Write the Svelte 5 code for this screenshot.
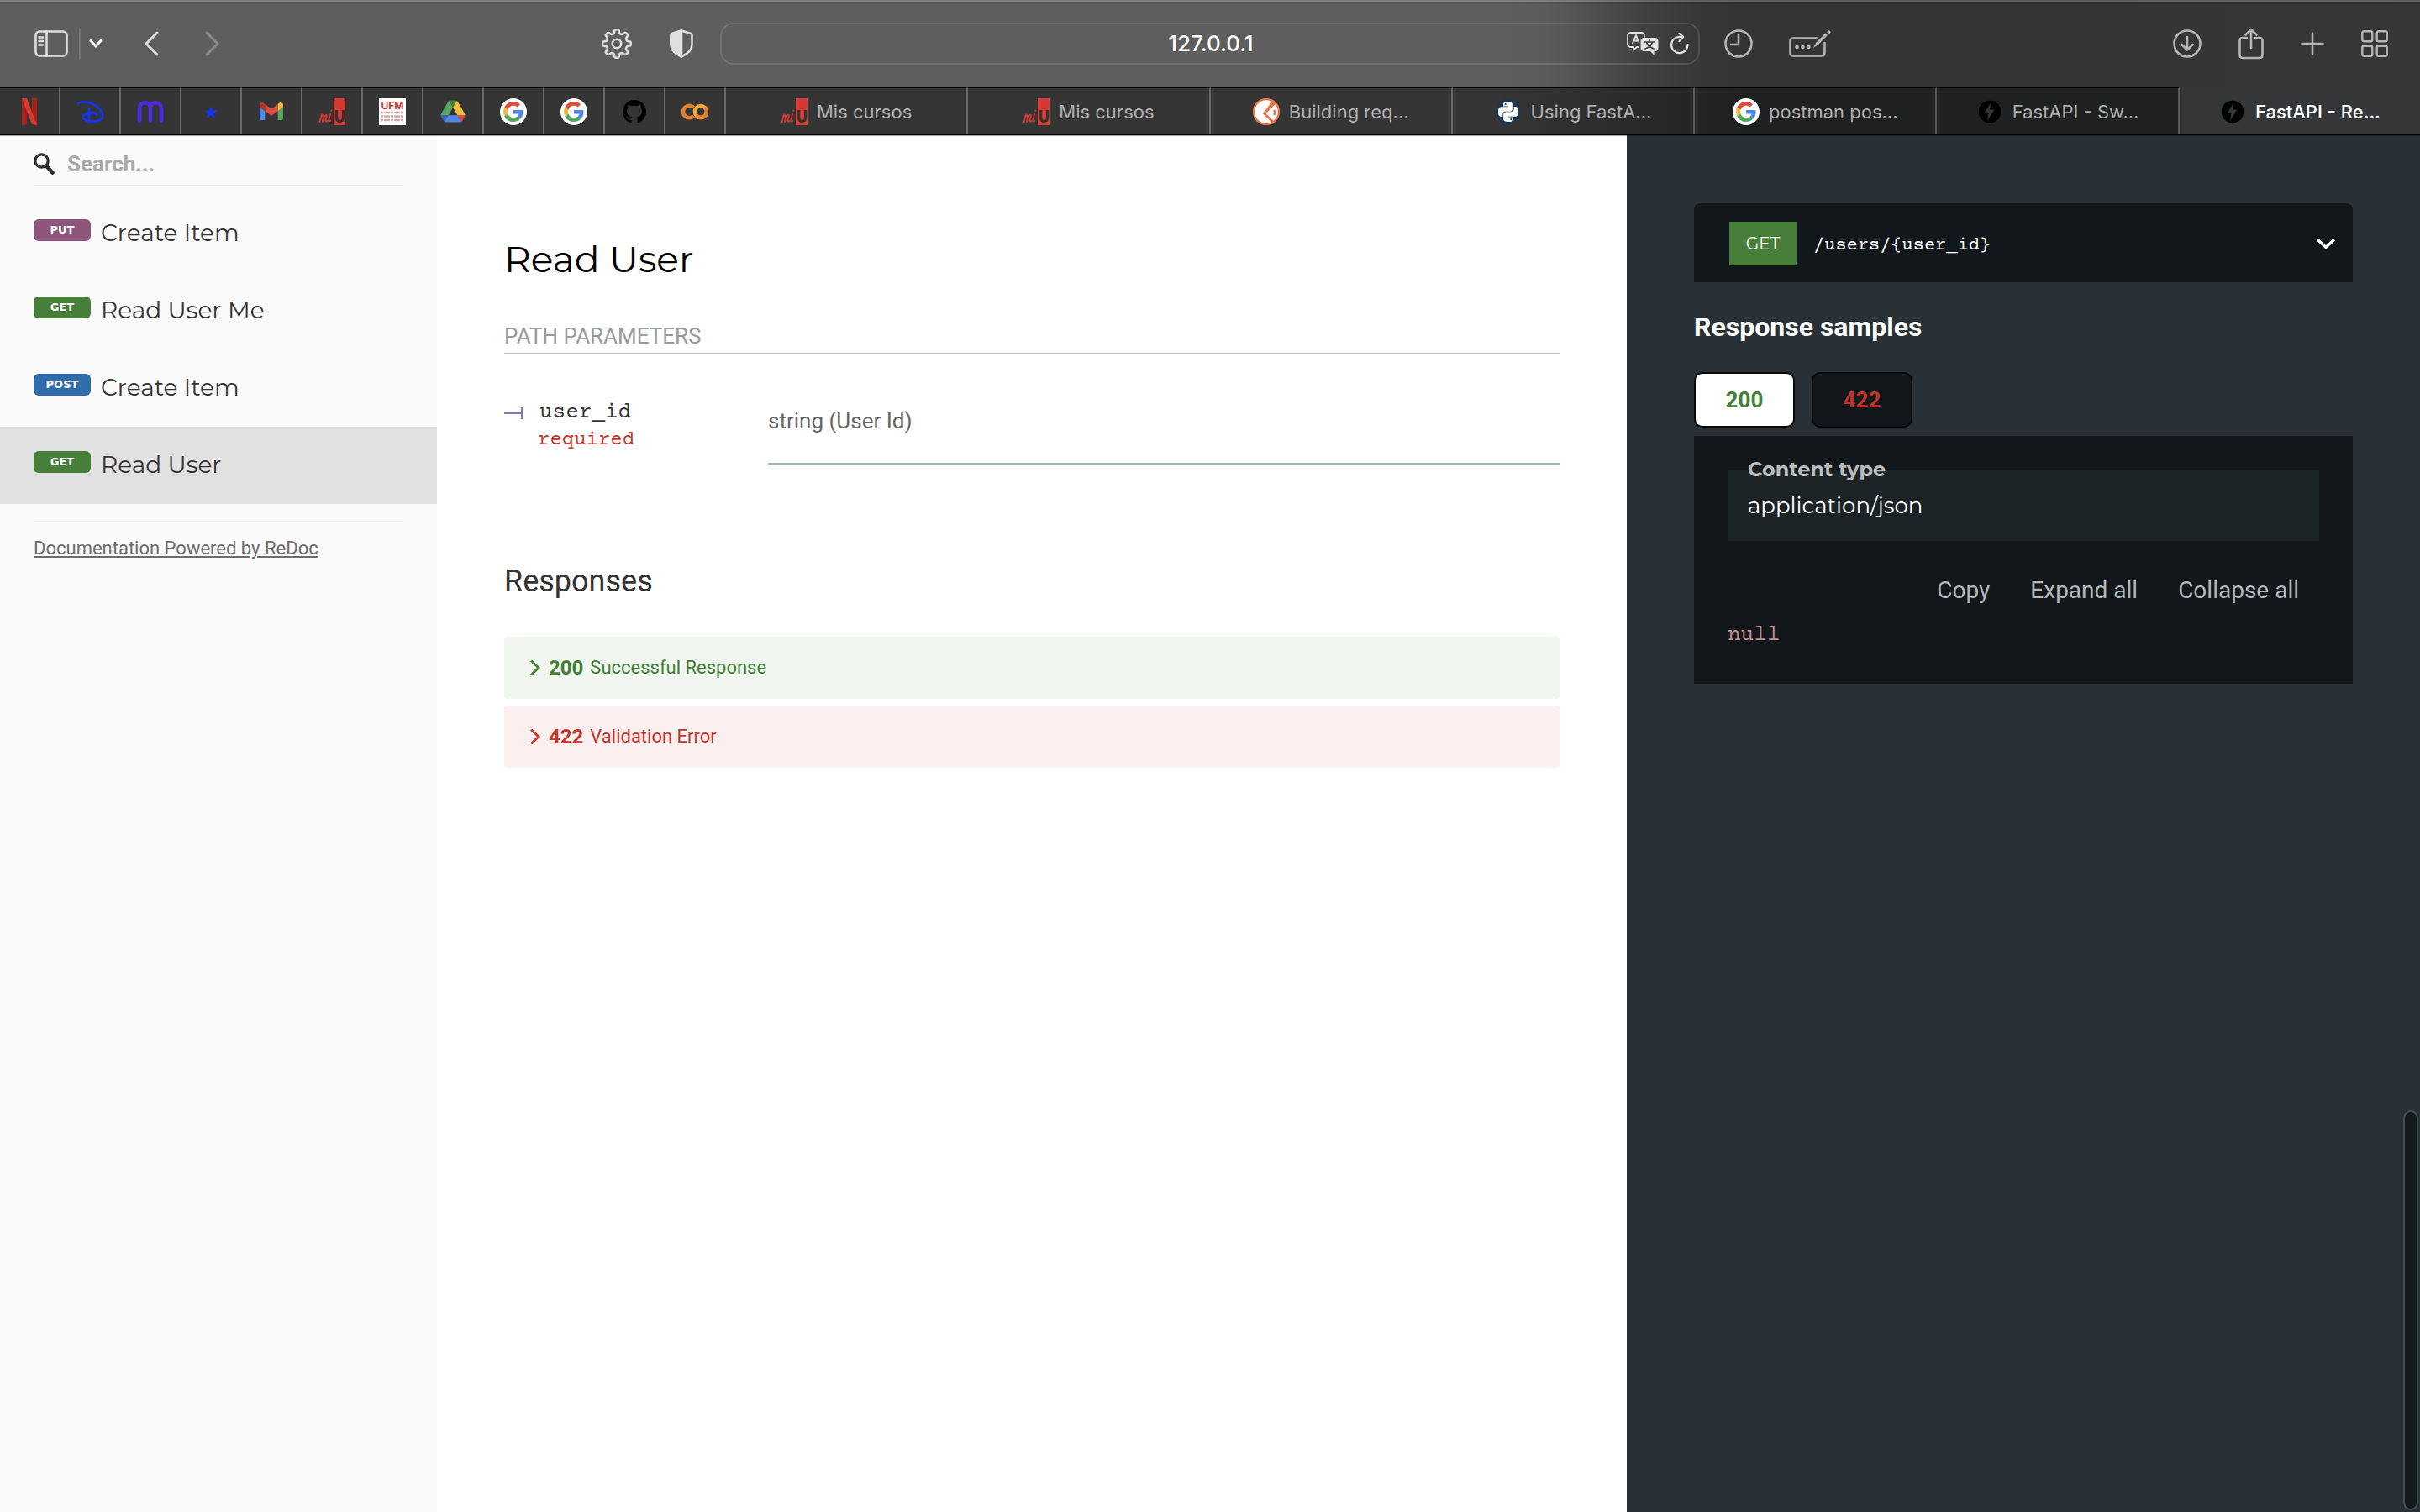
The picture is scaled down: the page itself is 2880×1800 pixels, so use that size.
<script>
  const pinned = ['netflix', 'disney', 'miro', 'star', 'gmail', 'miu', 'ufm', 'drive', 'google', 'google', 'github', 'colab'];
  const pinnedNames = ['Netflix', 'Disney+', 'Miro', 'Starred', 'Gmail', 'MiU', 'UFM', 'Google Drive', 'Google', 'Google', 'GitHub', 'Colab'];
  const tabs = [
    { icon: 'miu', title: 'Mis cursos' },
    { icon: 'miu', title: 'Mis cursos' },
    { icon: 'building', title: 'Building req...' },
    { icon: 'python', title: 'Using FastA...' },
    { icon: 'google', title: 'postman pos...' },
    { icon: 'bolt', title: 'FastAPI - Sw...' },
    { icon: 'bolt', title: 'FastAPI - Re...', active: true },
  ];
  const operations = [
    { method: 'put', title: 'Create Item' },
    { method: 'get', title: 'Read User Me' },
    { method: 'post', title: 'Create Item' },
    { method: 'get', title: 'Read User', active: true },
  ];
  const responses = [
    { code: '200', text: 'Successful Response', kind: 'ok' },
    { code: '422', text: 'Validation Error', kind: 'bad' },
  ];
  let selected = $state('200');
  let url = $state('127.0.0.1');
  let query = $state('');

  // Outline of an eight-toothed gear centred on (18, 18)
  const gear = Array.from({ length: 160 }, (_, i) => {
    const a = (i / 160) * Math.PI * 2;
    const r = 14.6 + 2.3 * Math.tanh(Math.cos(a * 8) * 2.2);
    return `${i ? 'L' : 'M'}${(18 + r * Math.cos(a)).toFixed(2)} ${(18 + r * Math.sin(a)).toFixed(2)}`;
  }).join('') + 'Z';
</script>

{#snippet favicon(name)}
  <svg class="favicon" viewBox="0 0 32 32" aria-hidden="true">
    {#if name === 'netflix'}
      <path d="M7 0h6v31l-6 1zM19 0h6v32l-6-1z" fill="#a3231c" />
      <path d="M7 0h6l12 32-6-1z" fill="#d63a2c" />
    {:else if name === 'disney'}
      <g fill="none" stroke="#1433f5" stroke-width="2.800" stroke-linecap="round">
        <path d="M2 6C6 3 17 4 25 10c7 6 8 13 3 16-6 3-15 2-19-1-3-4 1-7 8-8 5 0 7 1 7 3" />
        <path d="M15 12v17" />
      </g>
    {:else if name === 'miro'}
      <path d="M3 27V12c0-9 13-9 13 0v15M16 12c0-9 13-9 13 0v15" fill="none" stroke="#4b2bdb" stroke-width="4.600" stroke-linecap="round" />
    {:else if name === 'star'}
      <path d="M16 9l2 5.400 6 .2-4.700 3.400 1.800 6L16 20.600 10.900 24l1.800-6L8 14.600l6-.2z" fill="#1433f5" />
    {:else if name === 'gmail'}
      <g transform="translate(2 5) scale(.318) translate(-52 -42)">
        <path fill="#4f87ed" d="M58 108h14V74L52 59v43c0 3.320 2.690 6 6 6" />
        <path fill="#58a55c" d="M120 108h14c3.320 0 6-2.690 6-6V59l-20 15" />
        <path fill="#f3bd42" d="M120 48v26l20-15v-8c0-7.420-8.470-11.650-14.400-7.200" />
        <path fill="#da4f3e" d="M72 74V48l24 18 24-18v26L96 92" />
        <path fill="#b7332a" d="M52 51v8l20 15V48l-5.600-4.200c-5.940-4.450-14.400-.22-14.400 7.200" />
      </g>
    {:else if name === 'miu'}
      <rect x="18" width="14" height="32" fill="#d43a33" />
      <path d="M21.500 14v9c0 6 8 6 8 0v-9" fill="none" stroke="#333" stroke-width="3.400" />
      <path d="M1.500 28L4 19.500M2.600 24c1-4 4.500-5.500 3.800-2.500L4.900 28M5.900 24c1-4 4.500-5.500 3.800-2.500L8.500 26.500c-.3 1.500.6 1.500 1.500.5M14 19l-1.700 7.500c-.3 1.500.8 1.500 1.800.3M15.300 14.500v.3" fill="none" stroke="#d43a33" stroke-width="1.900" stroke-linecap="round" stroke-linejoin="round" />
    {:else if name === 'ufm'}
      <rect width="32" height="32" fill="#fff" />
      <text x="16" y="13" text-anchor="middle" class="ufm">UFM</text>
      <path d="M2 17h28M2 21.500h28M2 26h28" stroke="#c98b88" stroke-width="2.400" stroke-dasharray="3 1" opacity=".75" />
    {:else if name === 'drive'}
      <g transform="translate(1.500 2.500) scale(.333)">
        <path d="m6.600 66.850 3.850 6.650c.8 1.400 1.950 2.500 3.300 3.300l13.750-23.800h-27.500c0 1.550.4 3.100 1.200 4.500z" fill="#3568cc" />
        <path d="m43.650 25-13.750-23.800c-1.350.8-2.500 1.900-3.300 3.300l-25.400 44a9 9 0 0 0-1.200 4.500h27.500z" fill="#58a55c" />
        <path d="m73.550 76.800c1.350-.8 2.500-1.900 3.300-3.300l1.600-2.750 7.650-13.250c.8-1.400 1.200-2.950 1.200-4.500h-27.500l5.850 11.500z" fill="#da4f3e" />
        <path d="m43.650 25 13.750-23.800c-1.350-.8-2.900-1.200-4.500-1.200h-18.500c-1.600 0-3.150.45-4.500 1.200z" fill="#3b8140" />
        <path d="m59.800 53h-32.300l-13.750 23.800c1.350.8 2.900 1.200 4.500 1.200h50.800c1.600 0 3.150-.45 4.500-1.200z" fill="#4f87ed" />
        <path d="m73.400 26.500-12.700-22c-.8-1.400-1.950-2.500-3.300-3.300l-13.750 23.800 16.150 28h27.450c0-1.550-.4-3.100-1.200-4.500z" fill="#f3bd42" />
      </g>
    {:else if name === 'google'}
      <circle cx="16" cy="16" r="16" fill="#fff" />
      <g transform="translate(4 4) scale(.5)">
        <path fill="#da4f3e" d="M24 9.500c3.540 0 6.710 1.220 9.210 3.600l6.850-6.850C35.900 2.380 30.470 0 24 0 14.620 0 6.510 5.380 2.560 13.220l7.980 6.190C12.430 13.720 17.740 9.500 24 9.500z" />
        <path fill="#4f87ed" d="M46.980 24.550c0-1.570-.15-3.090-.38-4.550H24v9.020h12.940c-.58 2.960-2.260 5.480-4.780 7.180l7.730 6c4.510-4.180 7.090-10.360 7.090-17.650z" />
        <path fill="#f3bd42" d="M10.530 28.590c-.48-1.450-.76-2.990-.76-4.590s.27-3.140.76-4.590l-7.980-6.190C.92 16.460 0 20.120 0 24c0 3.880.92 7.540 2.560 10.780l7.970-6.190z" />
        <path fill="#58a55c" d="M24 48c6.480 0 11.930-2.130 15.890-5.810l-7.730-6c-2.150 1.450-4.920 2.300-8.160 2.300-6.260 0-11.570-4.220-13.470-9.910l-7.980 6.190C6.510 42.620 14.620 48 24 48z" />
      </g>
    {:else if name === 'github'}
      <path transform="translate(2 2) scale(1.750)" fill="#000" d="M8 0C3.580 0 0 3.580 0 8c0 3.540 2.290 6.530 5.470 7.590.4.070.55-.17.55-.38 0-.19-.01-.82-.01-1.490-2.010.37-2.530-.49-2.690-.94-.09-.23-.48-.94-.82-1.130-.28-.15-.68-.52-.01-.53.63-.01 1.080.58 1.230.82.72 1.210 1.870.87 2.330.66.07-.52.28-.87.51-1.070-1.780-.2-3.640-.89-3.640-3.950 0-.87.31-1.590.82-2.150-.08-.2-.36-1.020.08-2.120 0 0 .67-.21 2.200.82.64-.18 1.320-.27 2-.27s1.360.09 2 .27c1.530-1.040 2.200-.82 2.200-.82.44 1.100.16 1.920.08 2.120.51.56.82 1.270.82 2.150 0 3.070-1.870 3.750-3.650 3.950.29.25.54.73.54 1.480 0 1.070-.01 1.930-.01 2.200 0 .21.15.46.55.38A8.010 8.010 0 0 0 16 8c0-4.420-3.580-8-8-8z" />
    {:else if name === 'colab'}
      <g fill="none" stroke-width="4.600">
        <path d="M14.500 10.800a7.300 7.300 0 1 0 0 10.400" stroke="#e2802f" />
        <circle cx="23" cy="16" r="7" stroke="#f0a93c" />
        <path d="M18 21a7 7 0 0 0 10-10" stroke="#e2802f" />
      </g>
    {:else if name === 'building'}
      <circle cx="16" cy="16" r="15" fill="#fff" stroke="#ec7442" stroke-width="2.400" />
      <path d="M24 4.500L13.500 18 24 28M13.500 18L26 6" fill="none" stroke="#ec7442" stroke-width="2.600" />
      <path d="M25 14c1.500 2 1.500 4 0 6" fill="none" stroke="#ec7442" stroke-width="2.200" />
    {:else if name === 'python'}
      <circle cx="16" cy="16" r="15" fill="#1d3850" />
      <path transform="translate(4 4)" fill="#fff" d="M14.250.18l.9.2.73.26.59.3.45.32.34.34.25.34.16.33.1.3.04.26.02.2-.01.13V8.500l-.05.63-.13.55-.21.46-.26.38-.3.31-.33.25-.35.19-.35.14-.33.1-.3.07-.26.04-.21.02H8.770l-.69.05-.59.14-.5.22-.41.27-.33.32-.27.35-.2.36-.15.37-.1.35-.07.32-.04.27-.02.21v3.060H3.170l-.21-.03-.28-.07-.32-.12-.35-.18-.36-.26-.36-.36-.35-.46-.32-.59-.28-.73-.21-.88-.14-1.050-.05-1.230.06-1.220.16-1.040.24-.87.32-.71.36-.57.4-.44.42-.33.42-.24.4-.16.36-.1.32-.05.24-.01h.16l.06.01h8.160v-.83H6.180l-.01-2.750-.02-.37.05-.34.11-.31.17-.28.25-.26.31-.23.38-.2.44-.18.51-.15.58-.12.64-.1.71-.06.77-.04.84-.02 1.270.05zm-6.300 1.980l-.23.33-.08.41.08.41.23.34.33.22.41.09.41-.09.33-.22.23-.34.08-.41-.08-.41-.23-.33-.33-.22-.41-.09-.41.09zm13.090 3.950l.28.06.32.12.35.18.36.27.36.35.35.47.32.59.28.73.21.88.14 1.040.05 1.230-.06 1.230-.16 1.040-.24.86-.32.71-.36.57-.4.45-.42.33-.42.24-.4.16-.36.09-.32.05-.24.02-.16-.01h-8.220v.82h5.840l.01 2.760.02.36-.05.34-.11.31-.17.29-.25.25-.31.24-.38.2-.44.17-.51.15-.58.13-.64.09-.71.07-.77.04-.84.01-1.270-.04-1.070-.14-.9-.2-.73-.25-.59-.3-.45-.33-.34-.34-.25-.34-.16-.33-.1-.3-.04-.25-.02-.2.01-.13v-5.340l.05-.64.13-.54.21-.46.26-.38.3-.32.33-.24.35-.2.35-.14.33-.1.3-.06.26-.04.21-.02.13-.01h5.840l.69-.05.59-.14.5-.21.41-.28.33-.32.27-.35.2-.36.15-.36.1-.35.07-.32.04-.28.02-.21V6.070h2.090l.14.01zm-6.470 14.250l-.23.33-.08.41.08.41.23.33.33.23.41.08.41-.08.33-.23.23-.33.08-.41-.08-.41-.23-.33-.33-.23-.41-.08-.41.08z" />
    {:else}
      <circle cx="16" cy="16" r="13.300" fill="#000" />
      <path d="M17.500 5L9.500 17.500h5l-1.500 9.500 8.500-13.500h-5.500z" fill="#343536" />
    {/if}
  </svg>
{/snippet}

<div class="window">
  <header class="toolbar">
    <div class="left">
      <div class="nav">
        <button class="ic" aria-label="Show sidebar">
          <svg width="40" height="32" viewBox="0 0 40 32"><rect x="1.500" y="1.500" width="37" height="29" rx="4.500" /><path d="M14.500 1.500v29M5.500 8.500h4.500M5.500 13h4.500M5.500 17.500h4.500" /></svg>
        </button>
        <span class="divider"></span>
        <button class="ic chev" aria-label="Tab groups">
          <svg width="16" height="12" viewBox="0 0 16 12"><path d="M2 2.500l6 6.500 6-6.500" stroke-width="3" /></svg>
        </button>
        <button class="ic back" aria-label="Back">
          <svg width="18" height="30" viewBox="0 0 18 30"><path d="M16 2L3 15l13 13" stroke-width="3" /></svg>
        </button>
        <button class="ic forward" aria-label="Forward">
          <svg width="18" height="30" viewBox="0 0 18 30"><path d="M2 2l13 13L2 28" stroke-width="3" /></svg>
        </button>
      </div>
      <div class="tools">
        <button class="ic" aria-label="Settings">
          <svg width="36" height="36" viewBox="0 0 36 36"><path d={gear} /><circle cx="18" cy="18" r="5.200" /></svg>
        </button>
        <button class="ic" aria-label="Privacy report">
          <svg width="28" height="34" viewBox="0 0 28 34"><path d="M14 1.500L25 5c1 .4 1.500 1 1.500 2v11c0 7-5 11-12.500 14.500C6.500 29 1.500 25 1.500 18V7c0-1 .5-1.600 1.500-2z" /><path d="M14 1.500V32.500C6.500 29 1.500 25 1.500 18V7c0-1 .5-1.600 1.500-2z" fill="currentColor" /></svg>
        </button>
      </div>
    </div>

    <div class="address">
      <input type="text" aria-label="Address" bind:value={url} />
      <button class="ic bright" aria-label="Translate">
        <svg width="38" height="28" viewBox="0 0 38 28">
          <path d="M14 18h-2l-4 3.500V18H5c-2.500 0-4-1.500-4-4V5c0-2.500 1.500-4 4-4h12c2.500 0 4 1.500 4 4v1" stroke-width="1.800" />
          <path d="M7 13.500L11 4l3.500 8.500M8.500 10.500h5" stroke-width="1.800" />
          <path d="M20.500 7h13c2.500 0 4 1.500 4 4v8c0 2.500-1.500 4-4 4h-1v4.500L28 23h-7.500c-2.500 0-4-1.500-4-4v-8c0-2.500 1.500-4 4-4z" fill="currentColor" stroke="none" />
          <path d="M21.500 12h11M27 9.500V12M30.500 12c-1 4-4 6.500-8.500 8M23.500 12c1 4 4 6.500 8.500 8" stroke="#3e3f40" stroke-width="1.700" />
        </svg>
      </button>
      <button class="ic bright" aria-label="Reload">
        <svg width="22" height="26" viewBox="0 0 22 26"><path d="M20.500 14a9.700 9.700 0 1 1-9.500-9.200h4M10.500 0.800l4.800 4.200-4.800 5" stroke-width="2.200" /></svg>
      </button>
    </div>

    <div class="right">
      <div class="after">
        <button class="ic" aria-label="History">
          <svg width="34" height="34" viewBox="0 0 34 34"><circle cx="17" cy="17" r="15.500" /><path d="M17 7v11H8" /></svg>
        </button>
        <button class="ic" aria-label="Autofill">
          <svg width="50" height="32" viewBox="0 0 50 32">
            <path d="M34 9.500H5c-2.200 0-3.500 1.300-3.500 3.500v14c0 2.200 1.300 3.500 3.500 3.500h34c2.200 0 3.500-1.300 3.500-3.500V15" />
            <g fill="currentColor" stroke="none"><circle cx="9.500" cy="20" r="2.300" /><circle cx="16.500" cy="20" r="2.300" /><circle cx="23.500" cy="20" r="2.300" /><path d="M29 21l3-6L43.500 3.500l2.500 2.500L34.500 17.500z" /><circle cx="47.500" cy="2.300" r="2" /></g>
          </svg>
        </button>
      </div>
      <div class="actions">
        <button class="ic" aria-label="Downloads">
          <svg width="34" height="34" viewBox="0 0 34 34"><circle cx="17" cy="17" r="15.500" /><path d="M17 9v15M10.500 18l6.500 6.500 6.500-6.500" /></svg>
        </button>
        <button class="ic" aria-label="Share">
          <svg width="30" height="38" viewBox="0 0 30 38"><path d="M10 12H5c-2.300 0-3.500 1.200-3.500 3.500v17c0 2.300 1.200 3.500 3.500 3.500h20c2.300 0 3.500-1.200 3.500-3.500v-17c0-2.300-1.200-3.500-3.500-3.500h-5M15 24V2.500M8.500 8.500L15 2l6.500 6.500" /></svg>
        </button>
        <button class="ic" aria-label="New tab">
          <svg width="28" height="28" viewBox="0 0 28 28"><path d="M14 1.500v25M1.500 14h25" /></svg>
        </button>
        <button class="ic" aria-label="Tab overview">
          <svg width="32" height="32" viewBox="0 0 32 32"><g stroke-width="2.400"><rect x="1.300" y="1.300" width="12" height="12" rx="2" /><rect x="18.700" y="1.300" width="12" height="12" rx="2" /><rect x="1.300" y="18.700" width="12" height="12" rx="2" /><rect x="18.700" y="18.700" width="12" height="12" rx="2" /></g></svg>
        </button>
      </div>
    </div>
  </header>

  <nav class="tabs" aria-label="Tabs">
    {#each pinned as name, i}
      <button class="tab pinned" aria-label={pinnedNames[i]}>{@render favicon(name)}</button>
    {/each}
    {#each tabs as tab}
      <button class="tab" class:active={tab.active}>{@render favicon(tab.icon)}<span>{tab.title}</span></button>
    {/each}
  </nav>

  <div class="docs">
    <aside>
      <label class="search">
        <svg width="25" height="26" viewBox="0 0 25 26" aria-hidden="true"><circle cx="9.500" cy="9.500" r="7.700" fill="none" stroke="#2b2b2b" stroke-width="3.200" /><path d="M15.500 16l7 7.500" stroke="#2b2b2b" stroke-width="4.600" stroke-linecap="round" /></svg>
        <input type="text" placeholder="Search..." aria-label="Search" bind:value={query} />
      </label>
      <ul class="menu">
        {#each operations as op}
          <li><a href="#operation" class:current={op.active}><span class="badge {op.method}">{op.method}</span><span>{op.title}</span></a></li>
        {/each}
      </ul>
      <div class="powered"><a href="#redoc">Documentation Powered by ReDoc</a></div>
    </aside>

    <main>
      <h1>Read User</h1>
      <h5>Path Parameters</h5>
      <table>
        <tbody>
          <tr>
            <th scope="row">
              <div class="param">
                <svg width="22" height="32" viewBox="0 0 22 32" aria-hidden="true"><path d="M0 16h20M21 9v14" stroke="#7c7cbd" stroke-width="2" /></svg>
                <div><div class="name">user_id</div><div class="required">required</div></div>
              </div>
            </th>
            <td>string (User Id)</td>
          </tr>
        </tbody>
      </table>
      <h3>Responses</h3>
      <div class="responses">
        {#each responses as r}
          <button class="response {r.kind}">
            <svg width="14" height="20" viewBox="0 0 14 20" aria-hidden="true"><path d="M2 1.500L11 10l-9 8.500" fill="none" stroke="currentColor" stroke-width="2.800" /></svg>
            <strong>{r.code}</strong><span>{r.text}</span>
          </button>
        {/each}
      </div>
    </main>

    <section class="samples" aria-label="Samples">
      <button class="endpoint">
        <span class="verb">GET</span>
        <span class="path">/users/&lbrace;user_id&rbrace;</span>
        <svg width="24" height="14" viewBox="0 0 24 14" aria-hidden="true"><path d="M2 2l10 9.500L22 2" fill="none" stroke="#fff" stroke-width="3.400" /></svg>
      </button>
      <h2>Response samples</h2>
      <div class="codes" role="tablist">
        {#each responses as r}
          <button role="tab" class={r.kind} class:on={selected === r.code} aria-selected={selected === r.code} onclick={() => (selected = r.code)}>{r.code}</button>
        {/each}
      </div>
      <div class="panel">
        <div class="mime">
          <div class="label">Content type</div>
          <div class="value">application/json</div>
        </div>
        <div class="controls"><button>Copy</button><button>Expand all</button><button>Collapse all</button></div>
        <pre>null</pre>
      </div>
    </section>
  </div>
  <div class="thumb"></div>
</div>

<style>
  :global(body) { margin: 0; background: #fff; }
  * { box-sizing: border-box; }
  button { border: 0; margin: 0; padding: 0; background: none; font: inherit; color: inherit; text-align: left; }
  input { border: 0; padding: 0; margin: 0; background: none; outline: none; min-width: 0; }
  svg { display: block; flex: none; }
  h1, h2, h3, h5, ul, pre { margin: 0; padding: 0; font-weight: 400; }

  .window { min-height: 100vh; display: flex; flex-direction: column; font-family: Roboto, sans-serif; }

  .toolbar {
    display: grid; grid-template-columns: 1fr 1166px 1fr; align-items: center; height: 104px; padding-bottom: 2px;
    border-top: 2px solid rgba(255, 255, 255, .2);
    background: linear-gradient(90deg, #5e5e5e 62%, #5a5b5a 64%, #4d4f4d 66%, #3f4141 68%, #373839 70%, #333435 72%, #353638) border-box;
    color: #dedede;
  }
  .left, .right { display: flex; justify-content: space-between; align-items: center; }
  .left { padding: 0 32px 0 41px; }
  .right { padding: 0 38px 0 29px; color: #b4b5b5; }
  .nav, .tools, .after, .actions { display: flex; align-items: center; }
  .tools { gap: 45px; }
  .after { gap: 43px; }
  .actions { gap: 44px; }
  .ic { display: flex; }
  .ic svg { fill: none; stroke: currentColor; stroke-width: 2.600; stroke-linecap: round; stroke-linejoin: round; }
  .divider { width: 2px; height: 36px; margin: 0 10px 0 13px; background: #747474; }
  .chev { color: #fff; }
  .back { margin-left: 49px; }
  .forward { margin-left: 55px; color: #8a8a8a; }
  .address {
    display: flex; align-items: center; gap: 14px; height: 50px; padding: 0 11px 0 101px;
    border: 2px solid rgba(255, 255, 255, .13); border-radius: 16px;
  }
  .address input { flex: 1; color: #fff; text-align: center; font: 500 26px/32px Inter, sans-serif; }
  .bright { color: #e2e2e2; }

  .tabs {
    display: flex; height: 57px; border-bottom: 1px solid #000;
    background: linear-gradient(90deg, #353535 62%, #303030 65%, #262726 69%, #1f2020 72%);
  }
  .tab {
    flex: 1 1 0; display: flex; align-items: center; justify-content: center; gap: 11px; min-width: 0;
    border-top: 1px solid #000; border-right: 2px solid rgba(255, 255, 255, .26);
    color: #afafaf; font: 400 22px/28px Inter, sans-serif; white-space: nowrap;
  }
  .pinned { flex: none; width: 72px; }
  .active { border-top-color: transparent; border-right: 0; background: #353638 border-box; color: #fff; font-weight: 500; }
  .favicon { width: 32px; height: 32px; }
  .ufm { font: 700 12px Inter, sans-serif; fill: #b9403a; }

  .docs { flex: 1; display: grid; grid-template-columns: 520px 3fr 2fr; }
  .docs > * { border-top: 1px solid rgba(0, 0, 0, .35); min-width: 0; }

  aside { background: #fafafa; }
  .search { display: flex; align-items: center; gap: 15px; height: 60px; margin: 0 40px; padding-top: 8px; border-bottom: 2px solid #e1e1e1; }
  .search input { flex: 1; font: 700 26px/32px Roboto, sans-serif; color: #333; }
  .search input::placeholder { color: #a9a9a9; opacity: 1; }
  .menu { list-style: none; margin-top: 10px; }
  .menu a { display: flex; gap: 12px; height: 92px; padding: 29px 40px; color: #333; text-decoration: none; font: 400 28px/32px Montserrat, Inter, sans-serif; }
  .menu .current { background: #e1e1e1; }
  .badge { width: 68px; height: 26px; border-radius: 6px; color: #fff; text-align: center; text-transform: uppercase; font: 700 13px/26px 'DejaVu Sans', sans-serif; }
  .put { background: #8f567d; }
  .get { background: #477e3a; }
  .post { background: #316cab; }
  .powered { margin: 20px 40px 0; padding-top: 17px; border-top: 2px solid #e5e5e5; font-size: 22px; line-height: 28px; }
  .powered a { color: #6c6c6c; }

  main { padding: 120px 80px; background: #fff; color: #333; }
  h1 { color: #000; font: 400 44px/52px Montserrat, Inter, sans-serif; }
  h5 { margin-top: 50px; padding-bottom: 4px; border-bottom: 2px solid #bcc0c3; color: #969b9e; font-size: 26px; line-height: 32px; text-transform: uppercase; }
  table { width: 100%; margin-top: 32px; border-collapse: collapse; }
  th { width: 25%; padding: 22px 0 0; text-align: left; vertical-align: top; font-weight: 400; }
  td { padding: 31px 0 34px; border-bottom: 2px solid #9fb4be; vertical-align: top; color: #666; font-size: 26px; line-height: 32px; }
  .param { display: flex; gap: 18px; font-family: 'Courier Prime', 'Liberation Mono', monospace; line-height: 32px; }
  .name { padding-left: 2px; font-size: 26px; }
  .required { font-size: 24px; color: #c8372d; }
  h3 { margin-top: 117px; font-size: 36px; line-height: 44px; }
  .responses { display: grid; gap: 8px; margin-top: 44px; }
  .response { display: flex; align-items: center; height: 74px; padding: 0 30px; border-radius: 4px; font-size: 22px; line-height: 28px; }
  .response strong { margin: 0 8px 0 9px; font-size: 24px; }
  .ok { color: #418035; }
  .bad { color: #c5342b; }
  .response.ok { background: #f0f5ef; }
  .response.bad { background: #fbf0ef; }

  .samples { padding: 80px; background: #293136; color: #fff; }
  .endpoint { display: flex; align-items: center; gap: 20px; width: 100%; height: 94px; padding: 2px 20px 0 42px; border-radius: 8px 8px 0 0; background: #11171a; }
  .verb { width: 80px; background: #477e3a; text-align: center; font: 400 20px/52px Montserrat, Inter, sans-serif; }
  .path { flex: 1; padding-top: 5px; font: 400 22px/32px 'Courier Prime', 'Liberation Mono', monospace; }
  h2 { margin-top: 33px; font-size: 32px; line-height: 40px; font-weight: 700; }
  .codes { display: flex; gap: 20px; margin-top: 34px; }
  .codes button { width: 120px; height: 66px; border: 2px solid #07090b; border-radius: 10px; background: #11171a; text-align: center; font-size: 26px; font-weight: 700; }
  .codes .on { background: #fff; }
  .panel { margin-top: 10px; padding: 40px 40px 41px; background: #11171a; }
  .mime { padding: 0 24px 26px; background: #1c2326; font-family: Montserrat, Inter, sans-serif; line-height: 32px; }
  .label { display: flex; align-items: flex-end; height: 16px; margin-bottom: 11px; color: #b9bbbc; font-size: 24px; font-weight: 700; }
  .value { font-size: 26px; }
  .controls { display: flex; justify-content: flex-end; gap: 48px; margin-top: 41px; padding-right: 24px; color: #b6b8b9; font-size: 28px; line-height: 36px; }
  pre { margin-top: 20px; color: #c98c8f; font: 400 26px/32px 'Courier Prime', 'Liberation Mono', monospace; }

  .thumb { position: fixed; right: 2px; bottom: 2px; width: 18px; height: 476px; border: 2px solid #454e53; border-radius: 9px; background: #151a1c; }
</style>
